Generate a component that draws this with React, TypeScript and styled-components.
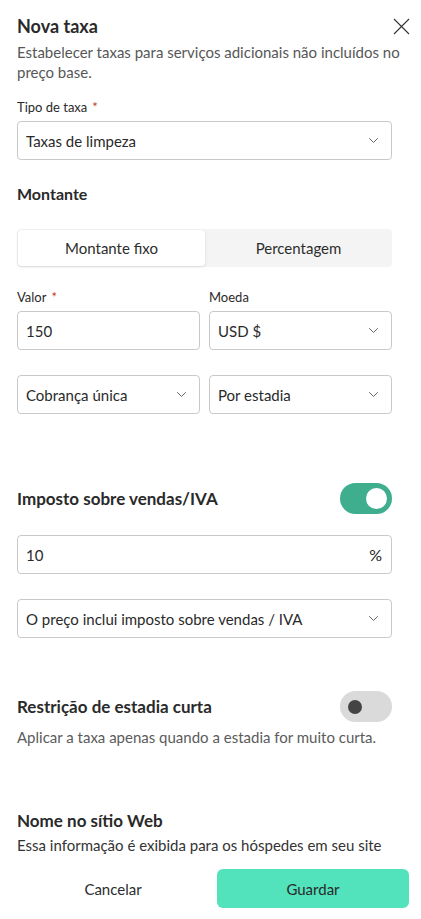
import React, { useState } from 'react';
import styled, { createGlobalStyle } from 'styled-components';

const GlobalStyle = createGlobalStyle`
  html, body {
    margin: 0;
    padding: 0;
    background: #ffffff;
  }
  body {
    font-family: Lato, 'Noto Sans', 'Liberation Sans', sans-serif;
    color: #2b2b2b;
    -webkit-font-smoothing: antialiased;
  }
  * {
    box-sizing: border-box;
  }
`;

const Panel = styled.div`
  width: 421px;
  height: 919px;
  padding: 0 12px 0 17px;
  display: flex;
  flex-direction: column;
  overflow: hidden;
`;

const Header = styled.div`
  display: flex;
  align-items: center;
  justify-content: space-between;
  height: 26px;
  margin-top: 13px;
`;

const Title = styled.h1`
  margin: 0;
  font-size: 18px;
  font-weight: 700;
  color: #2a2a2a;
`;

const CloseButton = styled.button`
  border: 0;
  background: none;
  padding: 0;
  width: 18px;
  height: 18px;
  display: flex;
  align-items: center;
  justify-content: center;
  margin-right: -1px;
  cursor: pointer;
`;

const Subtitle = styled.p`
  margin: 3px 0 0;
  font-size: 15px;
  line-height: 20px;
  color: #575757;
`;

const Body = styled.div`
  margin-right: 17px;
  display: flex;
  flex-direction: column;
`;

const Label = styled.label`
  display: block;
  font-size: 13px;
  line-height: 16px;
  color: #2a2a2a;
  margin-bottom: 6px;
`;

const Required = styled.span`
  color: #c0392b;
  margin-left: 5px;
`;

const Field = styled.div<{ $top?: number }>`
  margin-top: ${(p) => p.$top ?? 0}px;
  min-width: 0;
`;

const Box = styled.div`
  height: 39px;
  border: 1px solid #c9c9c9;
  border-radius: 4px;
  display: flex;
  align-items: center;
  justify-content: space-between;
  padding: 0 13px 0 8px;
  font-size: 15px;
  color: #2a2a2a;
  background: #fff;
`;

const Suffix = styled.span`
  font-size: 16px;
  color: #222;
  margin-right: -4px;
`;

const SectionTitle = styled.h2<{ $top: number; $size?: number }>`
  margin: ${(p) => p.$top}px 0 0;
  font-size: ${(p) => p.$size ?? 16}px;
  font-weight: 700;
  line-height: 22px;
  color: #2a2a2a;
`;

const Segmented = styled.div`
  margin-top: 24px;
  height: 38px;
  background: #f4f4f4;
  border-radius: 4px;
  display: grid;
  grid-template-columns: 1fr 1fr;
  padding: 1px 0 1px 1px;
`;

const Segment = styled.button<{ $active?: boolean }>`
  border: 0;
  border-radius: 4px;
  font-family: inherit;
  font-size: 15px;
  color: #2d2d2d;
  background: ${(p) => (p.$active ? '#ffffff' : 'transparent')};
  box-shadow: ${(p) => (p.$active ? '0 1px 3px rgba(0,0,0,0.12)' : 'none')};
  cursor: pointer;
`;

const Row = styled.div<{ $top: number }>`
  margin-top: ${(p) => p.$top}px;
  display: grid;
  grid-template-columns: 1fr 1fr;
  column-gap: 9px;
`;

const ToggleRow = styled.div<{ $top: number }>`
  margin-top: ${(p) => p.$top}px;
  display: flex;
  align-items: center;
  justify-content: space-between;
`;

const Switch = styled.button<{ $on: boolean }>`
  width: 52px;
  height: 31px;
  border: 0;
  border-radius: 16px;
  padding: 0;
  position: relative;
  background: ${(p) => (p.$on ? '#3fae8f' : '#dadada')};
  cursor: pointer;

  &::after {
    content: '';
    position: absolute;
    top: ${(p) => (p.$on ? 5 : 9)}px;
    left: ${(p) => (p.$on ? 26 : 8)}px;
    width: ${(p) => (p.$on ? 21 : 14)}px;
    height: ${(p) => (p.$on ? 21 : 14)}px;
    border-radius: 50%;
    background: ${(p) => (p.$on ? '#ffffff' : '#444444')};
  }
`;

const Hint = styled.p<{ $top: number; $dark?: boolean }>`
  margin: ${(p) => p.$top}px 0 0;
  font-size: 15px;
  line-height: 20px;
  color: ${(p) => (p.$dark ? '#333333' : '#5b5b5b')};
`;

const Footer = styled.div`
  margin-top: 14px;
  display: grid;
  grid-template-columns: 1fr 192px;
  column-gap: 8px;
`;

const GhostButton = styled.button`
  height: 39px;
  border: 0;
  background: none;
  font-family: inherit;
  font-size: 15px;
  color: #2d2d2d;
  cursor: pointer;
`;

const PrimaryButton = styled.button`
  height: 39px;
  border: 0;
  border-radius: 6px;
  background: #52e3bc;
  font-family: inherit;
  font-size: 15px;
  color: #2a2a2a;
  cursor: pointer;
`;

const Chevron = () => (
  <svg width="9" height="5" viewBox="0 0 9 5" fill="none">
    <path d="M0.5 0.5l4 4 4-4" stroke="#666" strokeWidth="1" strokeLinecap="round" strokeLinejoin="round" />
  </svg>
);

const Select = ({ value }: { value: string }) => (
  <Box>
    <span>{value}</span>
    <Chevron />
  </Box>
);

const App = () => {
  const [mode, setMode] = useState<'fixed' | 'percent'>('fixed');
  const [vat, setVat] = useState(true);
  const [shortStay, setShortStay] = useState(false);

  return (
    <Panel>
      <GlobalStyle />
      <Header>
        <Title>Nova taxa</Title>
        <CloseButton aria-label="Fechar">
          <svg width="17" height="17" viewBox="0 0 17 17" fill="none">
            <path d="M1 1l15 15M16 1L1 16" stroke="#333" strokeWidth="1.1" />
          </svg>
        </CloseButton>
      </Header>
      <Subtitle>
        Estabelecer taxas para serviços adicionais não incluídos no preço base.
      </Subtitle>

      <Body>
        <Field $top={17}>
          <Label>
            Tipo de taxa<Required>*</Required>
          </Label>
          <Select value="Taxas de limpeza" />
        </Field>

        <SectionTitle $top={23}>Montante</SectionTitle>

        <Segmented>
          <Segment $active={mode === 'fixed'} onClick={() => setMode('fixed')}>
            Montante fixo
          </Segment>
          <Segment $active={mode === 'percent'} onClick={() => setMode('percent')}>
            Percentagem
          </Segment>
        </Segmented>

        <Row $top={22}>
          <Field>
            <Label>
              Valor<Required>*</Required>
            </Label>
            <Box>150</Box>
          </Field>
          <Field>
            <Label>Moeda</Label>
            <Select value="USD $" />
          </Field>
        </Row>

        <Row $top={25}>
          <Select value="Cobrança única" />
          <Select value="Por estadia" />
        </Row>

        <ToggleRow $top={69}>
          <SectionTitle $top={0} $size={17}>
            Imposto sobre vendas/IVA
          </SectionTitle>
          <Switch $on={vat} onClick={() => setVat(!vat)} aria-label="Imposto" />
        </ToggleRow>

        <Field $top={21}>
          <Box>
            <span>10</span>
            <Suffix>%</Suffix>
          </Box>
        </Field>

        <Field $top={25}>
          <Select value="O preço inclui imposto sobre vendas / IVA" />
        </Field>

        <ToggleRow $top={53}>
          <SectionTitle $top={0} $size={17}>
            Restrição de estadia curta
          </SectionTitle>
          <Switch $on={shortStay} onClick={() => setShortStay(!shortStay)} aria-label="Restrição" />
        </ToggleRow>

        <Hint $top={5}>Aplicar a taxa apenas quando a estadia for muito curta.</Hint>

        <SectionTitle $top={63} $size={17}>
          Nome no sítio Web
        </SectionTitle>
        <Hint $top={3} $dark>
          Essa informação é exibida para os hóspedes em seu site
        </Hint>
      </Body>

      <Footer>
        <GhostButton>Cancelar</GhostButton>
        <PrimaryButton>Guardar</PrimaryButton>
      </Footer>
    </Panel>
  );
};

export default App;
